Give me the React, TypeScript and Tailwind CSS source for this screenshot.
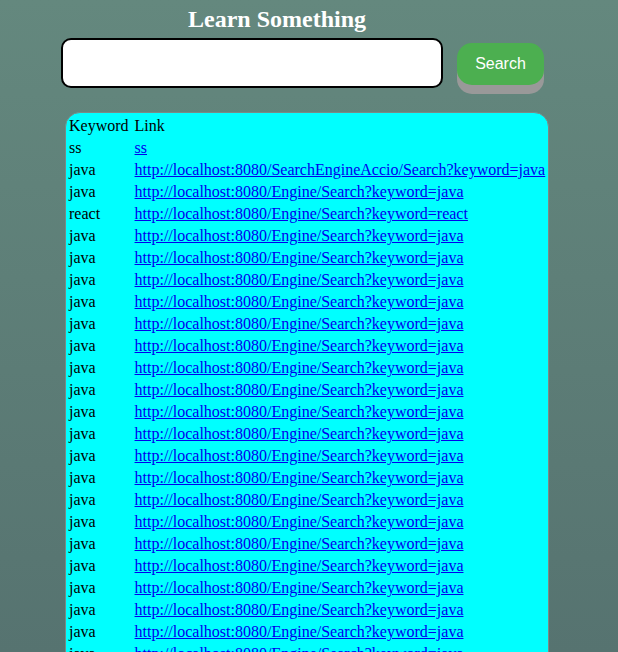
import React from 'react';

const App: React.FC = () => {
    const rows = [
        { keyword: 'ss', link: 'ss' },
        { keyword: 'java', link: 'http://localhost:8080/SearchEngineAccio/Search?keyword=java' },
        { keyword: 'java', link: 'http://localhost:8080/Engine/Search?keyword=java' },
        { keyword: 'react', link: 'http://localhost:8080/Engine/Search?keyword=react' },
        ...Array.from({ length: 24 }, () => ({
            keyword: 'java',
            link: 'http://localhost:8080/Engine/Search?keyword=java',
        })),
    ];

    return (
        <div className="h-screen overflow-hidden bg-gradient-to-b from-[#64887e] to-[#567370] font-['Liberation_Serif',serif] text-black">
            <h2 className="pt-[6px] ml-[188px] text-2xl leading-[27px] font-bold text-white">Learn Something</h2>

            {/* Search bar */}
            <div className="flex items-center gap-[14px] ml-[61px] mt-[5px]">
                <input
                    type="text"
                    className="w-[382px] h-[50px] bg-white border-2 border-black rounded-[10px] outline-none px-2"
                />
                <button className="w-[87px] h-[42px] mt-[2px] bg-[#4caf50] text-white text-base font-['Liberation_Sans',sans-serif] rounded-[15px] shadow-[0_9px_0_#999]">
                    Search
                </button>
            </div>

            {/* Results */}
            <div className="w-fit ml-[65px] mt-[24px] pt-[1px] bg-[#00ffff] border border-[#7a8a86] rounded-[15px]">
                <table className="border-separate border-spacing-[2px] text-base leading-[18px]">
                    <tbody>
                        <tr>
                            <td className="py-[1px] pl-[1px] pr-[3px]">Keyword</td>
                            <td className="p-[1px]">Link</td>
                        </tr>
                        {rows.map((row, i) => (
                            <tr key={i}>
                                <td className="py-[1px] pl-[1px] pr-[3px]">{row.keyword}</td>
                                <td className="p-[1px]">
                                    <a href="#" className="text-[#0000ee] underline">{row.link}</a>
                                </td>
                            </tr>
                        ))}
                    </tbody>
                </table>
            </div>
        </div>
    );
};

export default App;
